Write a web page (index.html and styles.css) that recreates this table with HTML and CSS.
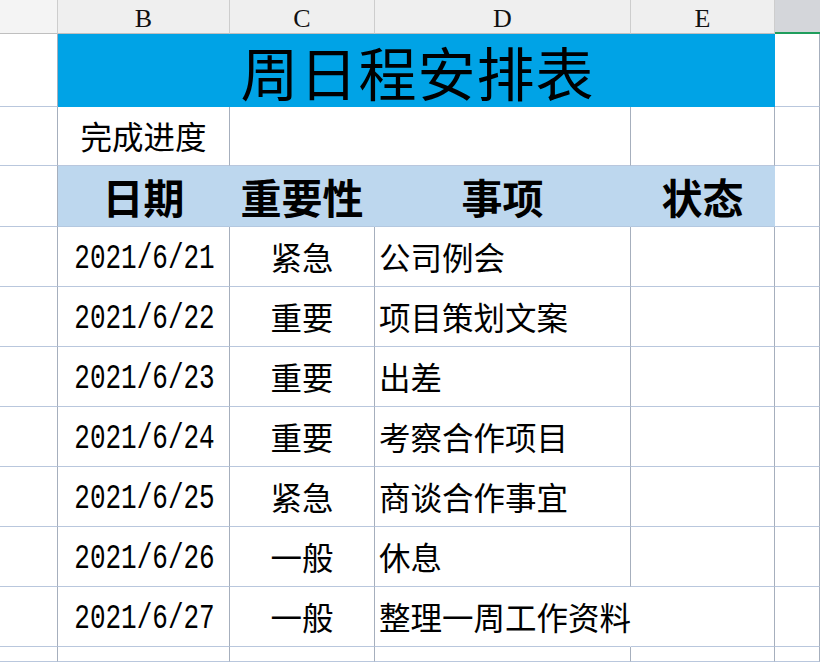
FILE: index.html
```html
<!DOCTYPE html>
<html lang="zh-CN">
<head>
<meta charset="utf-8">
<title>周日程安排表</title>
<link rel="stylesheet" href="styles.css">
</head>
<body>
<div class="sheet">
  <div class="colhead"></div>
  <div class="colhead">B</div>
  <div class="colhead">C</div>
  <div class="colhead">D</div>
  <div class="colhead">E</div>
  <div class="colhead selected"></div>

  <div class="cell"></div>
  <div class="cell title">周日程安排表</div>
  <div class="cell"></div>

  <div class="cell"></div>
  <div class="cell center">完成进度</div>
  <div class="cell merge2"></div>
  <div class="cell"></div>
  <div class="cell"></div>

  <div class="cell"></div>
  <div class="cell head">日期</div>
  <div class="cell head">重要性</div>
  <div class="cell head">事项</div>
  <div class="cell head">状态</div>
  <div class="cell"></div>

  <div class="cell"></div>
  <div class="cell date"><span>2021/6/21</span></div>
  <div class="cell center">紧急</div>
  <div class="cell item">公司例会</div>
  <div class="cell"></div>
  <div class="cell"></div>

  <div class="cell"></div>
  <div class="cell date"><span>2021/6/22</span></div>
  <div class="cell center">重要</div>
  <div class="cell item">项目策划文案</div>
  <div class="cell"></div>
  <div class="cell"></div>

  <div class="cell"></div>
  <div class="cell date"><span>2021/6/23</span></div>
  <div class="cell center">重要</div>
  <div class="cell item">出差</div>
  <div class="cell"></div>
  <div class="cell"></div>

  <div class="cell"></div>
  <div class="cell date"><span>2021/6/24</span></div>
  <div class="cell center">重要</div>
  <div class="cell item">考察合作项目</div>
  <div class="cell"></div>
  <div class="cell"></div>

  <div class="cell"></div>
  <div class="cell date"><span>2021/6/25</span></div>
  <div class="cell center">紧急</div>
  <div class="cell item">商谈合作事宜</div>
  <div class="cell"></div>
  <div class="cell"></div>

  <div class="cell"></div>
  <div class="cell date"><span>2021/6/26</span></div>
  <div class="cell center">一般</div>
  <div class="cell item">休息</div>
  <div class="cell"></div>
  <div class="cell"></div>

  <div class="cell"></div>
  <div class="cell date"><span>2021/6/27</span></div>
  <div class="cell center">一般</div>
  <div class="cell item overflow">整理一周工作资料</div>
  <div class="cell"></div>
  <div class="cell"></div>

  <div class="cell"></div>
  <div class="cell"></div>
  <div class="cell"></div>
  <div class="cell"></div>
  <div class="cell"></div>
  <div class="cell"></div>
</div>
</body>
</html>
```

FILE: styles.css
```css
* {
  box-sizing: border-box;
}

html, body {
  margin: 0;
  padding: 0;
  background: #ffffff;
  overflow: hidden;
}

body {
  width: 820px;
  height: 662px;
  font-family: "Noto Sans CJK SC", "Noto Sans", sans-serif;
  color: #000;
}

.sheet {
  display: grid;
  grid-template-columns: 58px 172px 145px 256px 144px 45px;
  grid-template-rows: 34px 73px 59px 61px 60px 60px 60px 60px 60px 60px 60px 15px;
  width: 820px;
  height: 662px;
}

.colhead {
  background: #efefef;
  border-right: 1px solid #cdcdcd;
  border-bottom: 1px solid #bfbfbf;
  font-family: "Liberation Serif", "DejaVu Serif", serif;
  font-size: 26px;
  line-height: 1;
  display: flex;
  align-items: center;
  justify-content: center;
  padding-top: 4px;
  color: #111;
}

.colhead:first-child {
  background: #f4f4f4;
}

.colhead.selected {
  background: #d4d6da;
  border-right: none;
  border-bottom: 2px solid #1f9d5c;
}

.cell {
  border-right: 1px solid #a6afbd;
  border-bottom: 1px solid #b9c7dd;
  display: flex;
  align-items: center;
  white-space: nowrap;
  font-size: 31.5px;
  line-height: 1;
}

.title {
  grid-column: span 4;
  background: #00a3e6;
  border-right: none;
  border-bottom: none;
  justify-content: center;
  font-size: 58px;
  font-weight: 400;
  letter-spacing: 1px;
  padding-left: 2px;
}

.merge2 {
  grid-column: span 2;
}

.center {
  justify-content: center;
}

.head {
  background: #bdd7ee;
  border-right-color: #bdd7ee;
  border-bottom-color: #b3c8e0;
  justify-content: center;
  font-size: 41px;
  font-weight: 700;
}

.date {
  justify-content: center;
  font-family: "Liberation Mono", "DejaVu Sans Mono", monospace;
  font-size: 26px;
  padding-top: 5px;
}

.date span {
  display: inline-block;
  transform: scaleY(1.32);
  padding-left: 2px;
}

.item {
  padding-left: 4px;
  overflow: visible;
}

.overflow {
  border-right-color: transparent;
}
```
